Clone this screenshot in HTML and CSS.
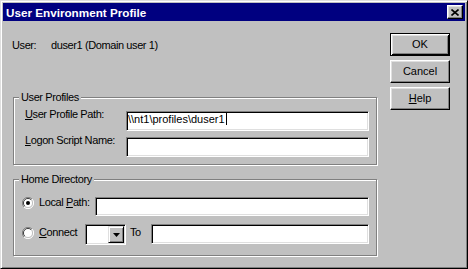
FILE: index.html
```html
<!DOCTYPE html>
<html lang="en">
<head>
    <meta charset="UTF-8">
    <title>User Environment Profile</title>
    <link rel="stylesheet" href="styles.css">
</head>
<body>
    <div class="window">
        <div class="titlebar">
            <span class="title">User Environment Profile</span>
            <span class="close">
                <svg width="8" height="7" viewBox="0 0 8 7"><path d="M0.5 0.5 L7.5 6.5 M7.5 0.5 L0.5 6.5" stroke="#000" stroke-width="1.6" fill="none"/></svg>
            </span>
        </div>

        <div class="content">
            <div class="main">
                <div class="user-row">
                    <span class="user-label">User:</span>
                    <span>duser1 (Domain user 1)</span>
                </div>

                <div class="group profiles">
                    <div class="group-title">User Profiles</div>
                    <div class="rows">
                        <div class="field-row">
                            <label class="field-label"><u>U</u>ser Profile Path:</label>
                            <div class="field wide">&#92;&#92;nt1&#92;profiles&#92;duser1<span class="caret"></span></div>
                        </div>
                        <div class="field-row">
                            <label class="field-label"><u>L</u>ogon Script Name:</label>
                            <div class="field wide"></div>
                        </div>
                    </div>
                </div>

                <div class="group home">
                    <div class="group-title">Home Directory</div>
                    <div class="rows">
                        <div class="field-row local">
                            <span class="radio">
                                <svg width="12" height="12" viewBox="0 0 12 12">
                                    <path d="M10 2 A5.5 5.5 0 0 0 2 10" stroke="#808080" fill="none"/>
                                    <path d="M9 3 A4.2 4.2 0 0 0 3 9" stroke="#000" fill="none"/>
                                    <circle cx="6" cy="6" r="4" fill="#fff"/>
                                    <path d="M2 10 A5.5 5.5 0 0 0 10 2" stroke="#fff" fill="none"/>
                                    <circle cx="6" cy="6" r="2" fill="#000"/>
                                </svg>
                            </span>
                            <label class="radio-label local-label">Local <u>P</u>ath:</label>
                            <div class="field local-path"></div>
                        </div>
                        <div class="field-row connect">
                            <span class="radio">
                                <svg width="12" height="12" viewBox="0 0 12 12">
                                    <path d="M10 2 A5.5 5.5 0 0 0 2 10" stroke="#808080" fill="none"/>
                                    <path d="M9 3 A4.2 4.2 0 0 0 3 9" stroke="#000" fill="none"/>
                                    <circle cx="6" cy="6" r="4" fill="#fff"/>
                                    <path d="M2 10 A5.5 5.5 0 0 0 10 2" stroke="#fff" fill="none"/>
                                </svg>
                            </span>
                            <label class="radio-label connect-label"><u>C</u>onnect</label>
                            <div class="combo">
                                <span class="combo-value"></span>
                                <span class="combo-btn">
                                    <svg width="7" height="4" viewBox="0 0 7 4"><path d="M0 0 H7 L3.5 4 Z" fill="#000"/></svg>
                                </span>
                            </div>
                            <span class="to-label">To</span>
                            <div class="field to-path"></div>
                        </div>
                    </div>
                </div>
            </div>

            <div class="buttons">
                <button class="btn default">OK</button>
                <button class="btn">Cancel</button>
                <button class="btn"><u>H</u>elp</button>
            </div>
        </div>
    </div>
</body>
</html>
```

FILE: styles.css
```css
* {
    box-sizing: border-box;
}
body {
    margin: 0;
    font-family: "Liberation Sans", Arial, sans-serif;
    font-size: 11px;
    line-height: 13px;
    letter-spacing: -0.4px;
    color: #000;
    background: #c0c0c0;
}
.window {
    width: 468px;
    height: 269px;
    background: #c0c0c0;
    border: 1px solid;
    border-color: #dfdfdf #000 #000 #dfdfdf;
    box-shadow: inset 1px 1px #fff, inset -1px -1px #808080;
    padding: 2px;
}
.titlebar {
    height: 18px;
    background: #000080;
    display: flex;
    align-items: center;
    justify-content: space-between;
    padding: 0 2px 0 3px;
}
.title {
    color: #fff;
    font-weight: bold;
    font-size: 11.7px;
    letter-spacing: 0;
}
.close {
    width: 16px;
    height: 14px;
    background: #c0c0c0;
    border: 1px solid;
    border-color: #fff #000 #000 #fff;
    box-shadow: inset -1px -1px #808080, inset 1px 1px #dfdfdf;
    display: flex;
    align-items: center;
    justify-content: center;
}
.close svg {
    display: block;
}
.content {
    display: flex;
    padding-left: 10px;
}
.main {
    width: 365px;
}
.user-row {
    display: flex;
    margin: 18px 0 0 -1px;
}
.user-label {
    width: 39px;
}
.group {
    width: 364px;
    border: 1px solid #808080;
    box-shadow: inset 1px 1px #fff, 1px 1px #fff;
}
.profiles {
    margin-top: 45px;
    padding: 0 7px 7px 11px;
}
.home {
    margin-top: 14px;
    padding: 0 7px 10px 8px;
}
.group-title {
    width: fit-content;
    margin: -7px 0 0 -6px;
    padding: 0 2px;
    background: #c0c0c0;
}
.home .group-title {
    margin-left: -3px;
}
.profiles .rows {
    margin-top: 7px;
    display: flex;
    flex-direction: column;
    gap: 6px;
}
.home .rows {
    margin-top: 11px;
    display: flex;
    flex-direction: column;
    gap: 8px;
}
.field-row {
    display: flex;
    align-items: flex-start;
}
.field-label {
    width: 101px;
    margin-top: -3px;
}
.field {
    height: 20px;
    background: #fff;
    border: 1px solid;
    border-color: #808080 #fff #fff #808080;
    box-shadow: inset 1px 1px #000, inset -1px -1px #dfdfdf;
    padding: 1px 0 0 1px;
    white-space: nowrap;
    letter-spacing: 0;
}
.wide {
    width: 243px;
}
.caret {
    display: inline-block;
    width: 1px;
    height: 12px;
    background: #000;
    margin-left: 1px;
    vertical-align: -2px;
}
.radio {
    width: 12px;
    height: 12px;
    margin-right: 5px;
}
.radio svg {
    display: block;
}
.radio-label {
    margin-top: -1px;
}
.local-label {
    width: 56px;
}
.local-path {
    width: 274px;
    height: 19px;
}
.connect .radio {
    margin-top: 3px;
}
.connect-label {
    width: 46px;
    margin-top: 2px;
}
.combo {
    width: 41px;
    height: 21px;
    display: flex;
    background: #fff;
    border: 1px solid;
    border-color: #808080 #fff #fff #808080;
    box-shadow: inset 1px 1px #000, inset -1px -1px #dfdfdf;
    padding: 1px;
}
.combo-value {
    flex: 1;
}
.combo-btn {
    width: 16px;
    height: 17px;
    background: #c0c0c0;
    border: 1px solid;
    border-color: #dfdfdf #000 #000 #dfdfdf;
    box-shadow: inset 1px 1px #fff, inset -1px -1px #808080;
    display: flex;
    align-items: center;
    justify-content: center;
}
.combo-btn svg {
    display: block;
}
.to-label {
    width: 21px;
    margin: 2px 0 0 4px;
}
.to-path {
    width: 218px;
}
.buttons {
    width: 60px;
    margin: 12px 0 0 12px;
    display: flex;
    flex-direction: column;
    gap: 4px;
}
.btn {
    height: 23px;
    padding: 0;
    font: inherit;
    color: #000;
    background: #c0c0c0;
    border: 1px solid;
    border-color: #fff #000 #000 #fff;
    box-shadow: inset -1px -1px #808080, inset 1px 1px #dfdfdf;
}
.btn.default {
    border-color: #000;
    box-shadow: inset 1px 1px #fff, inset -1px -1px #000, inset 2px 2px #dfdfdf, inset -2px -2px #808080;
}
```
